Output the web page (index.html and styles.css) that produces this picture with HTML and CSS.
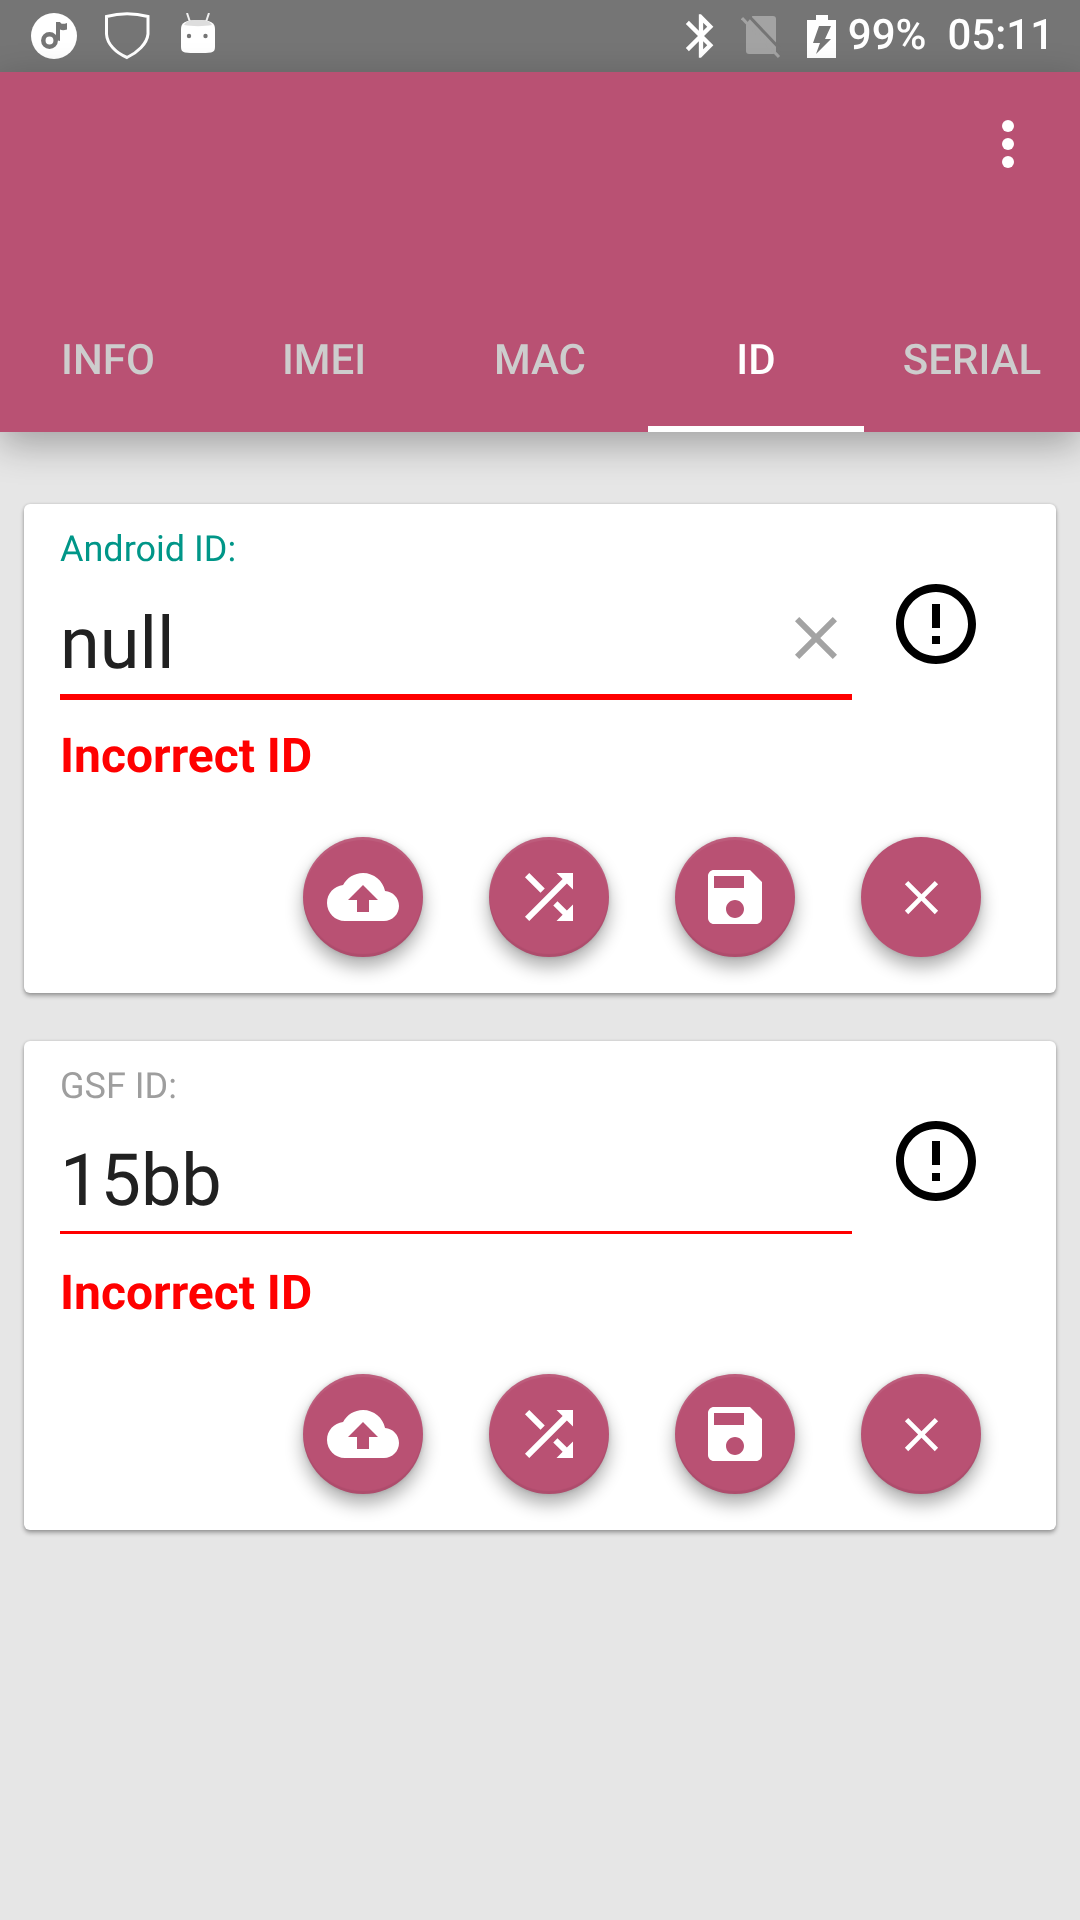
FILE: index.html
```html
<!DOCTYPE html>
<html lang="en">
<head>
<meta charset="utf-8">
<title>Device ID</title>
<link rel="stylesheet" href="styles.css">
</head>
<body>
<div class="app">
  <header class="status">
    <svg class="st-music" viewBox="0 0 46 46"><circle cx="23" cy="23" r="23" fill="#fff"/><path d="M25 27V9h4c1 2 3 2.500 7 1v6.500c-3 1-5 1-7 0V28z" fill="#757575"/><circle cx="18.500" cy="27.500" r="6.200" fill="none" stroke="#757575" stroke-width="4.500"/></svg>
    <svg class="st-shield" viewBox="0 0 46 48"><path d="M2.500 4.500Q23-1 44 4.500V22C43 32 33 41 23 45.500 12 41 3 32 2.500 22Z" fill="none" stroke="#fff" stroke-width="3"/></svg>
    <svg class="st-robot" viewBox="0 0 36 40"><path d="M7 0l3 9M29 0l-3 9" stroke="#f0f0f0" stroke-width="2"/><path d="M1 16c0-6 4-9 17-9s17 3 17 9v18c0 3-1 5-4 5.500-8 1-18 1-26 0-3-.5-4-2.500-4-5.500z" fill="#fff"/><path d="M4 12c2-4 6-5 14-5s12 1 14 5c-8 1.500-20 1.500-28 0z" fill="#ddd"/><circle cx="9" cy="23" r="2.200" fill="#757575"/><circle cx="25.500" cy="23" r="2.200" fill="#757575"/></svg>
    <div class="st-spacer"></div>
    <svg class="st-bt" viewBox="0 0 24 24"><path fill="#fff" d="M17.710 7.710L12 2h-1v7.590L6.410 5 5 6.410 10.590 12 5 17.590 6.410 19 11 14.410V22h1l5.710-5.710-4.300-4.290 4.300-4.290zM13 5.830l1.880 1.880L13 9.590V5.830zm1.880 10.460L13 18.170v-3.760l1.880 1.880z"/></svg>
    <svg class="st-sim" viewBox="0 0 40 44"><rect x="5" y="2" width="30" height="38" rx="3" fill="#a3a3a3"/><path d="M0 0h13L5 10H0z" fill="#757575"/><path d="M3 1l36 38" stroke="#757575" stroke-width="3" transform="translate(2 -2)"/><path d="M1 4l37 39" stroke="#a3a3a3" stroke-width="3"/></svg>
    <svg class="st-batt" viewBox="0 0 29 43"><path fill="#fff" fill-rule="evenodd" d="M9 0h12v5h8v38H0V5h9zM12 11h12l-6 13h6L9 39l4-11H6z"/></svg>
    <span class="st-pct">99%</span>
    <span class="st-time">05:11</span>
  </header>

  <section class="appbar">
    <div class="toolbar">
      <div class="menu"><i></i><i></i><i></i></div>
    </div>
    <nav class="tabs">
      <div class="tab">INFO</div>
      <div class="tab">IMEI</div>
      <div class="tab">MAC</div>
      <div class="tab active">ID</div>
      <div class="tab">SERIAL</div>
    </nav>
  </section>

  <main class="content">
    <article class="card">
      <div class="row">
        <div class="field">
          <div class="label label-focus">Android ID:</div>
          <div class="input">
            <span class="value">null</span>
            <svg class="clear" viewBox="0 0 24 24"><path fill="#a3a3a3" d="M19 6.410L17.590 5 12 10.590 6.410 5 5 6.410 10.590 12 5 17.590 6.410 19 12 13.410 17.590 19 19 17.590 13.410 12z"/></svg>
          </div>
          <div class="line line-focus"></div>
          <div class="error">Incorrect ID</div>
        </div>
        <svg class="alert" viewBox="0 0 24 24"><path d="M11 15h2v2h-2zm0-8h2v6h-2zm.990-5C6.470 2 2 6.480 2 12s4.470 10 9.990 10C17.520 22 22 17.520 22 12S17.520 2 11.990 2zM12 20c-4.420 0-8-3.580-8-8s3.580-8 8-8 8 3.580 8 8-3.580 8-8 8z"/></svg>
      </div>
      <div class="actions">
        <button class="fab"><svg class="ic" viewBox="0 0 24 24"><path d="M19.350 10.040C18.670 6.590 15.640 4 12 4 9.110 4 6.600 5.640 5.350 8.040 2.340 8.360 0 10.910 0 14c0 3.310 2.690 6 6 6h13c2.760 0 5-2.240 5-5 0-2.640-2.050-4.780-4.650-4.960zM14 13v4h-4v-4H7l5-5 5 5h-3z"/></svg></button>
        <button class="fab"><svg class="ic" viewBox="0 0 24 24"><path d="M10.590 9.170L5.410 4 4 5.410l5.170 5.170 1.420-1.410zM14.500 4l2.040 2.040L4 18.590 5.410 20 17.960 7.460 20 9.500V4h-5.500zm.33 9.410l-1.410 1.410 3.130 3.130L14.500 20H20v-5.500l-2.040 2.040-3.130-3.130z"/></svg></button>
        <button class="fab"><svg class="ic" viewBox="0 0 24 24"><path d="M17 3H5c-1.110 0-2 .9-2 2v14c0 1.100.89 2 2 2h14c1.100 0 2-.9 2-2V7l-4-4zm-5 16c-1.660 0-3-1.340-3-3s1.340-3 3-3 3 1.340 3 3-1.340 3-3 3zm3-10H5V5h10v4z"/></svg></button>
        <button class="fab fab-flat"><svg class="ic-close" viewBox="0 0 24 24"><path d="M19 6.410L17.590 5 12 10.590 6.410 5 5 6.410 10.590 12 5 17.590 6.410 19 12 13.410 17.590 19 19 17.590 13.410 12z"/></svg></button>
      </div>
    </article>

    <article class="card">
      <div class="row">
        <div class="field">
          <div class="label">GSF ID:</div>
          <div class="input">
            <span class="value">15bb</span>
          </div>
          <div class="line"></div>
          <div class="error">Incorrect ID</div>
        </div>
        <svg class="alert" viewBox="0 0 24 24"><path d="M11 15h2v2h-2zm0-8h2v6h-2zm.990-5C6.470 2 2 6.480 2 12s4.470 10 9.990 10C17.520 22 22 17.520 22 12S17.520 2 11.990 2zM12 20c-4.420 0-8-3.580-8-8s3.580-8 8-8 8 3.580 8 8-3.580 8-8 8z"/></svg>
      </div>
      <div class="actions">
        <button class="fab"><svg class="ic" viewBox="0 0 24 24"><path d="M19.350 10.040C18.670 6.590 15.640 4 12 4 9.110 4 6.600 5.640 5.350 8.040 2.340 8.360 0 10.910 0 14c0 3.310 2.690 6 6 6h13c2.760 0 5-2.240 5-5 0-2.640-2.050-4.780-4.650-4.960zM14 13v4h-4v-4H7l5-5 5 5h-3z"/></svg></button>
        <button class="fab"><svg class="ic" viewBox="0 0 24 24"><path d="M10.590 9.170L5.410 4 4 5.410l5.170 5.170 1.420-1.410zM14.500 4l2.040 2.040L4 18.590 5.410 20 17.960 7.460 20 9.500V4h-5.500zm.33 9.410l-1.410 1.410 3.130 3.130L14.500 20H20v-5.500l-2.040 2.040-3.130-3.130z"/></svg></button>
        <button class="fab"><svg class="ic" viewBox="0 0 24 24"><path d="M17 3H5c-1.110 0-2 .9-2 2v14c0 1.100.89 2 2 2h14c1.100 0 2-.9 2-2V7l-4-4zm-5 16c-1.660 0-3-1.340-3-3s1.340-3 3-3 3 1.340 3 3-1.340 3-3 3zm3-10H5V5h10v4z"/></svg></button>
        <button class="fab"><svg class="ic-close" viewBox="0 0 24 24"><path d="M19 6.410L17.590 5 12 10.590 6.410 5 5 6.410 10.590 12 5 17.590 6.410 19 12 13.410 17.590 19 19 17.590 13.410 12z"/></svg></button>
      </div>
    </article>
  </main>
</div>
</body>
</html>
```
FILE: styles.css
```css
* { box-sizing: border-box; }
html, body { margin: 0; padding: 0; }
body { width: 1080px; height: 1920px; overflow: hidden; font-family: Roboto, "Liberation Sans", sans-serif; background: #e6e6e6; text-rendering: geometricPrecision; }
.app { width: 1080px; height: 1920px; display: flex; flex-direction: column; background: #e6e6e6; }

.status { height: 72px; background: #757575; display: flex; align-items: center; padding-left: 31px; padding-right: 26px; color: #fff; flex: none; }
.st-music { width: 46px; height: 46px; flex: none; }
.st-shield { width: 46px; height: 48px; margin-left: 27px; flex: none; }
.st-robot { width: 36px; height: 40px; margin-left: 30px; margin-top: -6px; flex: none; }
.st-spacer { flex: 1; }
.st-bt { width: 52px; height: 52px; flex: none; }
.st-sim { width: 40px; height: 44px; margin-left: 14px; flex: none; }
.st-batt { width: 29px; height: 43px; margin-left: 26px; flex: none; }
.st-pct { font-size: 42px; font-weight: 500; margin-left: 12px; line-height: 72px; will-change: opacity; }
.st-time { font-size: 42px; font-weight: 500; margin-left: 21px; line-height: 72px; will-change: opacity; }

.appbar { height: 360px; background: #b95173; display: flex; flex-direction: column; flex: none; box-shadow: 0 12px 36px rgba(0,0,0,.3); position: relative; z-index: 1; }
.toolbar { flex: 1; display: flex; justify-content: flex-end; padding: 48px 66px 0 0; }
.menu { display: flex; flex-direction: column; gap: 6px; }
.menu i { display: block; width: 12px; height: 12px; border-radius: 50%; background: #fff; }
.tabs { display: flex; height: 144px; flex: none; }
.tab { width: 216px; display: flex; align-items: center; justify-content: center; font-size: 42px; font-weight: 500; color: #cdcdcd; will-change: opacity; }
.tab.active { color: #fff; box-shadow: inset 0 -6px 0 #fff; }

.content { flex: 1; display: flex; flex-direction: column; gap: 48px; padding: 72px 24px 0; }
.card { background: #fff; border-radius: 6px; height: 489px; padding-left: 36px; box-shadow: 0 3px 4px rgba(0,0,0,.3), 0 0 3px rgba(0,0,0,.15); }
.row { display: flex; height: 333px; }
.field { width: 792px; }
.label { font-size: 36px; line-height: 42px; padding-top: 24px; height: 66px; color: #9e9e9e; will-change: opacity; }
.label-focus { color: #009688; }
.input { height: 124px; display: flex; align-items: center; justify-content: space-between; }
.value { font-size: 72px; line-height: 84px; color: #212121; margin-top: 23px; will-change: opacity; }
.clear { width: 72px; height: 72px; margin-top: 12px; }
.line { height: 6px; border-top: 3px solid #f00; }
.line-focus { border-top-width: 6px; }
.error { font-size: 48px; font-weight: 700; color: #f00; line-height: 50px; margin-top: 31px; will-change: opacity; }
.alert { width: 96px; height: 96px; margin: 72px 0 0 36px; flex: none; }

.actions { display: flex; justify-content: flex-end; gap: 66px; padding-right: 75px; }
.fab { width: 120px; height: 120px; border: 0; padding: 0; border-radius: 50%; background: #b95173; display: flex; align-items: center; justify-content: center; box-shadow: 0 10px 18px rgba(0,0,0,.32), 0 0 4px rgba(0,0,0,.15), inset 0 3px 1px rgba(255,255,255,.07), inset 0 -3px 1px rgba(0,0,0,.06); }
.fab-flat { box-shadow: 0 10px 18px rgba(0,0,0,.32), 0 0 4px rgba(0,0,0,.15); }
.ic { width: 72px; height: 72px; fill: #fff; }
.ic-close { width: 57px; height: 57px; fill: #fff; }
```
